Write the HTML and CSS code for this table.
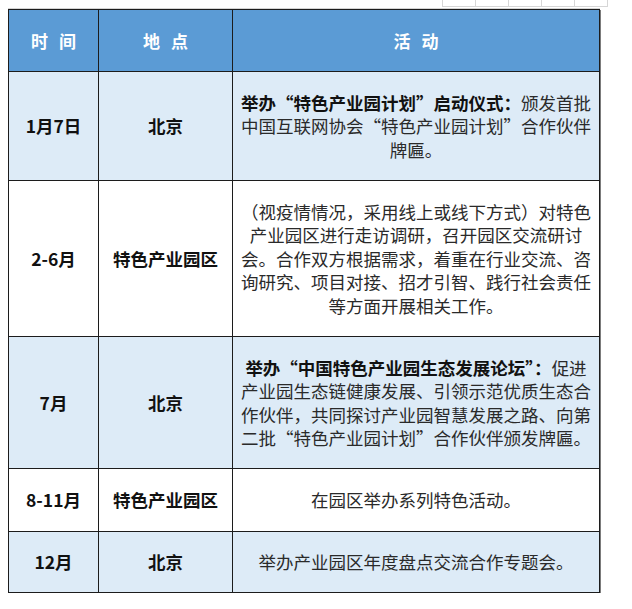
FILE: index.html
```html
<!DOCTYPE html>
<html lang="zh-CN">
<head>
<meta charset="utf-8">
<title>活动安排</title>
<link rel="stylesheet" href="styles.css">
</head>
<body>
<div class="sheet-grid">
  <span class="sheet-cell"></span><span class="sheet-cell"></span><span class="sheet-cell"></span><span class="sheet-cell"></span><span class="sheet-cell last"></span>
</div>
<div class="schedule">
  <div class="cell head">时间</div>
  <div class="cell head">地点</div>
  <div class="cell head">活动</div>

  <div class="cell key tint">1月7日</div>
  <div class="cell key tint">北京</div>
  <div class="cell desc tint"><p class="desc-text"><b>举办“特色产业园计划”启动仪式：</b>颁发首批<br>中国互联网协会“特色产业园计划”合作伙伴<br>牌匾。</p></div>

  <div class="cell key">2-6月</div>
  <div class="cell key">特色产业园区</div>
  <div class="cell desc"><p class="desc-text">（视疫情情况，采用线上或线下方式）对特色<br>产业园区进行走访调研，召开园区交流研讨<br>会。合作双方根据需求，着重在行业交流、咨<br>询研究、项目对接、招才引智、践行社会责任<br>等方面开展相关工作。</p></div>

  <div class="cell key tint">7月</div>
  <div class="cell key tint">北京</div>
  <div class="cell desc tint"><p class="desc-text"><b>举办“中国特色产业园生态发展论坛”：</b>促进<br>产业园生态链健康发展、引领示范优质生态合<br>作伙伴，共同探讨产业园智慧发展之路、向第<br>二批“特色产业园计划”合作伙伴颁发牌匾。</p></div>

  <div class="cell key">8-11月</div>
  <div class="cell key">特色产业园区</div>
  <div class="cell desc"><p class="desc-text">在园区举办系列特色活动。</p></div>

  <div class="cell key tint">12月</div>
  <div class="cell key tint">北京</div>
  <div class="cell desc tint"><p class="desc-text">举办产业园区年度盘点交流合作专题会。</p></div>
</div>
</body>
</html>
```

FILE: styles.css
```css
html, body {
  margin: 0;
  padding: 0;
  background: #ffffff;
}

body {
  font-family: "Noto Sans CJK SC", "Noto Sans", sans-serif;
  color: #262626;
}

.sheet-grid {
  display: flex;
  margin-left: 442px;
  width: max-content;
  border-bottom: 1px solid #d6d6d6;
}

.sheet-cell {
  width: 32px;
  height: 6px;
  border-left: 1px solid #d6d6d6;
}

.sheet-cell.last {
  border-right: 1px solid #d6d6d6;
}

.schedule {
  display: grid;
  grid-template-columns: 89px 133px 366px;
  grid-template-rows: 61px 108px 155px 131px 62px 60px;
  gap: 1px;
  width: max-content;
  margin: 2px 0 0 8px;
  background: #1c1c1c;
  border: 1px solid #1c1c1c;
  box-shadow: 0 -1px 0 #d4d4d4, 1px 1px 0 #7c7c7c;
}

.cell {
  display: flex;
  align-items: center;
  justify-content: center;
  text-align: center;
  background: #ffffff;
  font-size: 17.5px;
  line-height: 23.5px;
}

.cell.tint {
  background: #ddebf7;
}

.cell.head {
  background: #5b9bd5;
  color: #ffffff;
  font-weight: 700;
  font-size: 17px;
  letter-spacing: 11px;
  padding-left: 11px;
}

.cell.key {
  font-weight: 700;
  color: #111111;
}

.cell.desc {
  padding: 0 4px;
  color: #2a2a2a;
}

.desc-text {
  margin: 0;
  white-space: nowrap;
  text-align: center;
}

.desc-text b {
  font-weight: 700;
  color: #111111;
}
```
